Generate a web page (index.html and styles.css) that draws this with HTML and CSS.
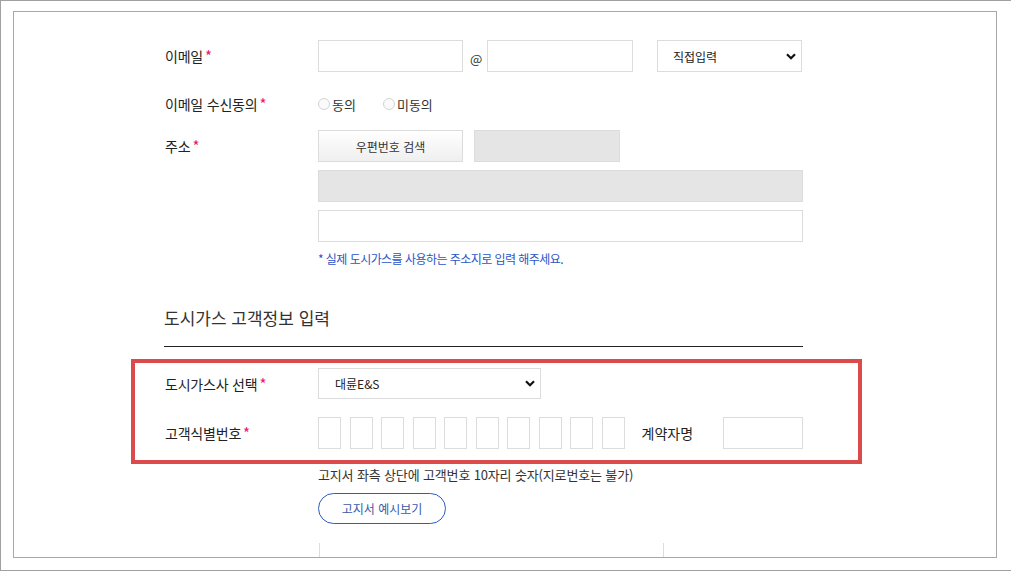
FILE: index.html
```html
<!DOCTYPE html>
<html lang="ko">
<head>
<meta charset="utf-8">
<title>도시가스 고객정보 입력</title>
<link rel="stylesheet" href="styles.css">
</head>
<body>
<div class="window">
  <div class="panel">
    <div class="form">
      <div class="row row-email">
        <div class="label">이메일<span class="req">*</span></div>
        <div class="field">
          <div class="input w145"></div>
          <span class="at">@</span>
          <div class="input w146"></div>
          <div class="select email-select">
            <span>직접입력</span>
            <svg class="chev" width="10" height="7" viewBox="0 0 10 7"><path d="M1 1.2 L5 5.2 L9 1.2" fill="none" stroke="#111" stroke-width="2.2"/></svg>
          </div>
        </div>
      </div>

      <div class="row row-radio">
        <div class="label">이메일 수신동의<span class="req">*</span></div>
        <div class="field">
          <span class="radio"></span><span class="rtext">동의</span>
          <span class="radio r2"></span><span class="rtext">미동의</span>
        </div>
      </div>

      <div class="row row-addr">
        <div class="label">주소<span class="req">*</span></div>
        <div class="field col">
          <div class="addr-top">
            <div class="btn-gray">우편번호 검색</div>
            <div class="input gray w146"></div>
          </div>
          <div class="input gray full"></div>
          <div class="input full"></div>
          <p class="note">* 실제 도시가스를 사용하는 주소지로 입력 해주세요.</p>
        </div>
      </div>

      <h2 class="section-title">도시가스 고객정보 입력</h2>

      <div class="highlight">
        <div class="row row-company">
          <div class="label">도시가스사 선택<span class="req">*</span></div>
          <div class="field">
            <div class="select company-select">
              <span>대륜E&amp;S</span>
              <svg class="chev" width="10" height="7" viewBox="0 0 10 7"><path d="M1 1.2 L5 5.2 L9 1.2" fill="none" stroke="#111" stroke-width="2.2"/></svg>
            </div>
          </div>
        </div>
        <div class="row row-cust">
          <div class="label">고객식별번호<span class="req">*</span></div>
          <div class="field">
            <div class="digits">
              <div class="digit"></div><div class="digit"></div><div class="digit"></div><div class="digit"></div><div class="digit"></div>
              <div class="digit"></div><div class="digit"></div><div class="digit"></div><div class="digit"></div><div class="digit"></div>
            </div>
            <span class="contract">계약자명</span>
            <div class="input w80"></div>
          </div>
        </div>
      </div>

      <div class="after">
        <p class="hint">고지서 좌측 상단에 고객번호 10자리 숫자(지로번호는 불가)</p>
        <div class="btn-outline">고지서 예시보기</div>
        <div class="preview-box"></div>
      </div>
    </div>
  </div>
</div>
</body>
</html>
```

FILE: styles.css
```css
* { box-sizing: border-box; }
html, body { margin: 0; padding: 0; background: #fff; }
body {
  font-family: "Noto Sans CJK KR", "Noto Sans", sans-serif;
  color: #222;
}
.window {
  width: 1011px;
  height: 571px;
  border-top: 1px solid #a0a0a0;
  border-left: 1px solid #a0a0a0;
  border-bottom: 1px solid #a0a0a0;
  overflow: hidden;
}
.panel {
  margin: 10px 0 0 12px;
  width: 984px;
  height: 547px;
  border: 1px solid #a8a8a8;
  overflow: hidden;
}
.form {
  padding: 28px 0 0 150px;
  width: 790px;
}
.row { display: flex; }
.label {
  width: 154px;
  flex: none;
  padding-left: 1px;
  font-size: 14px;
  line-height: 32px;
  color: #222;
  letter-spacing: -0.2px;
}
.req { color: #e5196a; margin-left: 2px; font-size: 15px; }
.field { display: flex; align-items: center; }
.field.col { flex-direction: column; align-items: flex-start; }

.input {
  height: 32px;
  border: 1px solid #dcdcdc;
  background: #fff;
  flex: none;
}
.input.gray { background: #e5e5e5; border-color: #dcdcdc; }
.w145 { width: 145px; }
.w146 { width: 146px; }
.w80 { width: 80px; }
.full { width: 485px; margin-top: 8px; }

.at {
  font-size: 13px;
  color: #333;
  width: 12px;
  margin: 4px 5px 0 7px;
  line-height: 1;
}
.select {
  height: 32px;
  border: 1px solid #dcdcdc;
  display: flex;
  align-items: center;
  justify-content: space-between;
  font-size: 12px;
  color: #222;
  flex: none;
}
.email-select {
  width: 145px;
  margin-left: 24px;
  padding: 0 5px 0 15px;
}
.company-select {
  width: 223px;
  height: 31px;
  padding: 0 5px 0 16px;
}
.chev { display: block; }

.row-radio { margin-top: 16px; height: 32px; }
.radio {
  width: 12px;
  height: 12px;
  border: 1px solid #d4d4d4;
  border-radius: 50%;
  background: #fafafa;
  flex: none;
}
.r2 { margin-left: 27px; }
.rtext { font-size: 13px; color: #333; margin-left: 2px; }

.row-addr { margin-top: 10px; }
.addr-top { display: flex; }
.btn-gray {
  width: 145px;
  height: 32px;
  border: 1px solid #dcdcdc;
  background: linear-gradient(#ffffff, #efefef);
  font-size: 12px;
  color: #333;
  display: flex;
  align-items: center;
  justify-content: center;
  margin-right: 11px;
}
.note {
  margin: 8px 0 0 0;
  font-size: 12px;
  line-height: 18px;
  color: #2a56c6;
  letter-spacing: -0.55px;
}

.section-title {
  margin: 37px 0 0 0;
  width: 639px;
  font-size: 17px;
  font-weight: normal;
  line-height: 26px;
  color: #333;
  padding-bottom: 15px;
  border-bottom: 1px solid #222;
}

.highlight {
  margin: 12px 0 0 -33px;
  width: 731px;
  border: 4px solid #dc4b4c;
  padding: 5px 0 11px 29px;
}
.row-company { height: 31px; }
.row-company .label { line-height: 31px; }
.row-cust { margin-top: 18px; height: 32px; }
.digits { display: flex; gap: 8.5px; }
.digit {
  width: 23px;
  height: 32px;
  border: 1px solid #dcdcdc;
}
.contract {
  font-size: 14px;
  color: #222;
  margin: 0 30px 0 17px;
}

.after { padding-left: 154px; }
.hint {
  margin: 2px 0 0 0;
  font-size: 13px;
  line-height: 18px;
  color: #333;
  letter-spacing: -0.15px;
}
.btn-outline {
  margin-top: 9px;
  width: 128px;
  height: 31px;
  border: 1px solid #2d5bc0;
  border-radius: 16px;
  font-size: 12px;
  color: #3b5aa8;
  display: flex;
  align-items: center;
  justify-content: center;
}
.preview-box {
  margin-top: 19px;
  margin-left: 1px;
  width: 345px;
  height: 40px;
  border-left: 1px solid #dcdcdc;
  border-right: 1px solid #dcdcdc;
}
```
